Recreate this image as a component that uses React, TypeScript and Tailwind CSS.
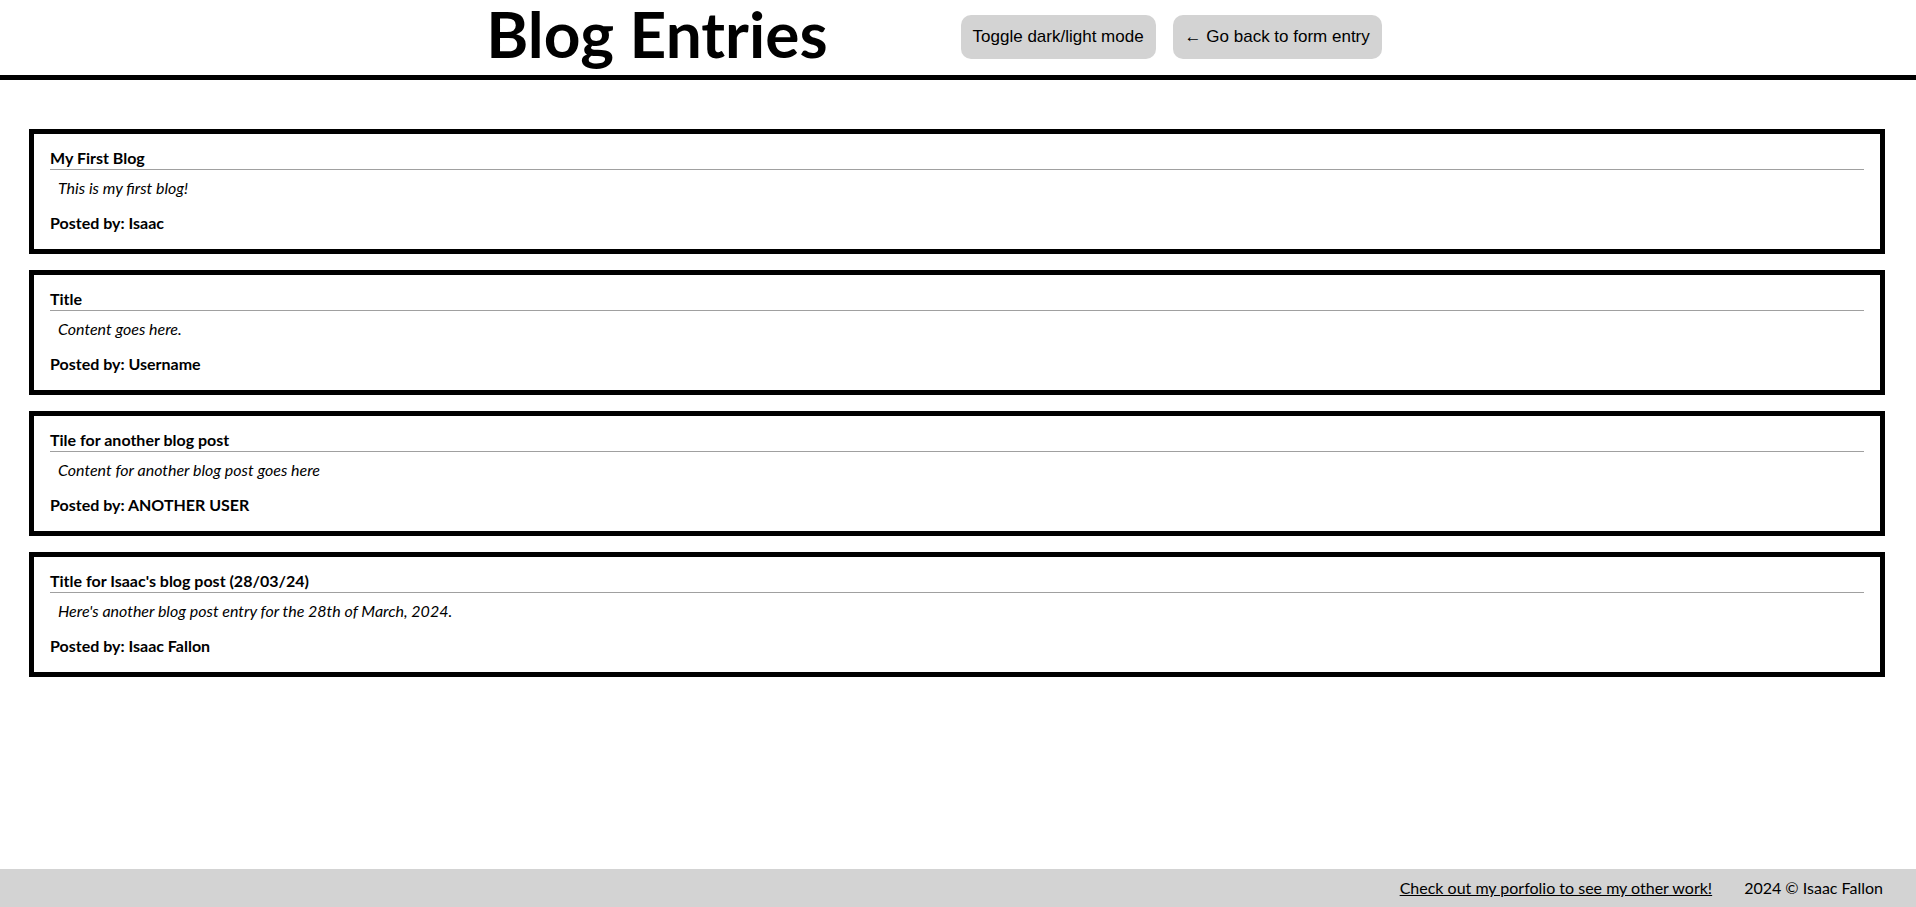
import React from 'react';

interface Post {
  title: string;
  content: string;
  author: string;
}

const posts: Post[] = [
  { title: 'My First Blog', content: 'This is my first blog!', author: 'Isaac' },
  { title: 'Title', content: 'Content goes here.', author: 'Username' },
  { title: 'Tile for another blog post', content: 'Content for another blog post goes here', author: 'ANOTHER USER' },
  {
    title: "Title for Isaac's blog post (28/03/24)",
    content: "Here's another blog post entry for the 28th of March, 2024.",
    author: 'Isaac Fallon',
  },
];

const PostCard: React.FC<{ post: Post }> = ({ post }) => (
  <div className="border-[5px] border-black px-4 pt-[14px] pb-[17px]">
    <h3 className="text-base font-bold leading-[19px] pb-[2px] border-b border-[#a0a0a0]">{post.title}</h3>
    <p className="italic text-base leading-[19px] mt-2 pl-2">{post.content}</p>
    <p className="font-bold text-base leading-[19px] mt-4">Posted by: {post.author}</p>
  </div>
);

const btn =
  'h-[44px] mt-[15px] bg-[#d3d3d3] rounded-[10px] px-3 text-[17px] leading-[20px] font-["Liberation_Sans",Arial,sans-serif]';

const App: React.FC = () => {
  return (
    <div className="min-h-[907px] flex flex-col bg-white text-black font-['Lato','Liberation_Sans',sans-serif]">
      {/* Header */}
      <header className="flex items-start justify-center h-[80px] border-b-[5px] border-black">
        <h1 className="text-[64px] font-bold leading-[66px] pt-[1px]">Blog Entries</h1>
        <button className={`${btn} ml-[133px]`}>Toggle dark/light mode</button>
        <button className={`${btn} ml-[17px] mr-[48px]`}>← Go back to form entry</button>
      </header>

      {/* Posts */}
      <main className="flex-1 flex flex-col gap-4 ml-[29px] mr-[31px] mt-[49px]">
        {posts.map((p, i) => (
          <PostCard key={i} post={p} />
        ))}
      </main>

      {/* Footer */}
      <footer className="h-[38px] bg-[#d3d3d3] flex items-center justify-end gap-8 pr-[33px] text-base">
        <a href="#" className="underline">Check out my porfolio to see my other work!</a>
        <span>2024 © Isaac Fallon</span>
      </footer>
    </div>
  );
};

export default App;
